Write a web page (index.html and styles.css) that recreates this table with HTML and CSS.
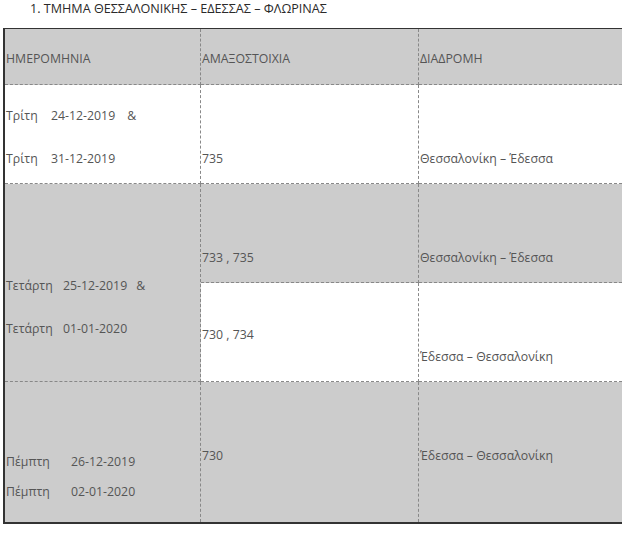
FILE: index.html
```html
<!DOCTYPE html>
<html lang="el">
<head>
<meta charset="utf-8">
<link rel="stylesheet" href="styles.css">
</head>
<body>
<h3 class="title">1. ΤΜΗΜΑ ΘΕΣΣΑΛΟΝΙΚΗΣ – ΕΔΕΣΣΑΣ – ΦΛΩΡΙΝΑΣ</h3>
<div class="sched">
  <div class="cell head c1"><div class="ln">ΗΜΕΡΟΜΗΝΙΑ</div></div>
  <div class="cell head c2"><div class="ln">ΑΜΑΞΟΣΤΟΙΧΙΑ</div></div>
  <div class="cell head c3"><div class="ln">ΔΙΑΔΡΟΜΗ</div></div>

  <div class="cell white c1 p20">
    <div class="ln"><span class="day day-a">Τρίτη</span><span>24-12-2019</span><span class="amp">&amp;</span></div>
    <div class="ln gap25"><span class="day day-a">Τρίτη</span><span>31-12-2019</span></div>
  </div>
  <div class="cell white c2 p63"><div class="ln">735</div></div>
  <div class="cell white c3 p63"><div class="ln">Θεσσαλονίκη – Έδεσσα</div></div>

  <div class="cell grey c1 span2 p91">
    <div class="ln"><span class="day day-b">Τετάρτη</span><span>25-12-2019</span><span class="amp amp-b">&amp;</span></div>
    <div class="ln gap25"><span class="day day-b">Τετάρτη</span><span>01-01-2020</span></div>
  </div>
  <div class="cell grey c2 p63"><div class="ln">733 , 735</div></div>
  <div class="cell grey c3 p63"><div class="ln">Θεσσαλονίκη – Έδεσσα</div></div>
  <div class="cell white c2 p41"><div class="ln">730 , 734</div></div>
  <div class="cell white c3 p63"><div class="ln">Έδεσσα – Θεσσαλονίκη</div></div>

  <div class="cell grey c1 last p69">
    <div class="ln"><span class="day day-c">Πέμπτη</span><span>26-12-2019</span></div>
    <div class="ln gap12"><span class="day day-c">Πέμπτη</span><span>02-01-2020</span></div>
  </div>
  <div class="cell grey c2 last p63"><div class="ln">730</div></div>
  <div class="cell grey c3 last p63"><div class="ln">Έδεσσα – Θεσσαλονίκη</div></div>
</div>
</body>
</html>
```

FILE: styles.css
```css
html, body {
  margin: 0;
  padding: 0;
  background: #ffffff;
}
body {
  font-family: "Open Sans", "Noto Sans", sans-serif;
  font-size: 12.3px;
  color: #555555;
}
.title {
  margin: 0;
  padding: 1px 0 0 30px;
  height: 27px;
  line-height: 16px;
  font-size: 12.6px;
  font-weight: 500;
  color: #2a2a2a;
}
.sched {
  display: grid;
  grid-template-columns: 196px 218px 203px;
  grid-template-rows: 56px 99px 99px 99px 140px;
  width: 617px;
  margin-left: 3px;
  border-top: 1px solid #333333;
  border-left: 2px solid #333333;
  border-bottom: 2px solid #333333;
  box-sizing: content-box;
}
.cell {
  box-sizing: border-box;
  padding-left: 1px;
  border-bottom: 1px dashed #888888;
  border-right: 1px dashed #888888;
}
.cell.c3 { border-right: none; }
.cell.last { border-bottom: none; }
.head { background: #cccccc; padding-top: 21px; }
.grey { background: #cccccc; }
.white { background: #ffffff; }
.span2 { grid-row: span 2; }
.c1 { grid-column: 1; }
.c2 { grid-column: 2; }
.c3 { grid-column: 3; }
.ln {
  line-height: 18px;
  white-space: nowrap;
}
.gap25 { margin-top: 25px; }
.gap12 { margin-top: 12px; }
.p20 { padding-top: 22px; }
.p41 { padding-top: 43px; }
.p63 { padding-top: 65px; }
.p69 { padding-top: 71px; }
.p91 { padding-top: 93px; }
.day { display: inline-block; }
.day-a { width: 45px; }
.day-b { width: 57px; }
.day-c { width: 65px; }
.amp { margin-left: 12px; }
.amp-b { margin-left: 9px; }
```
